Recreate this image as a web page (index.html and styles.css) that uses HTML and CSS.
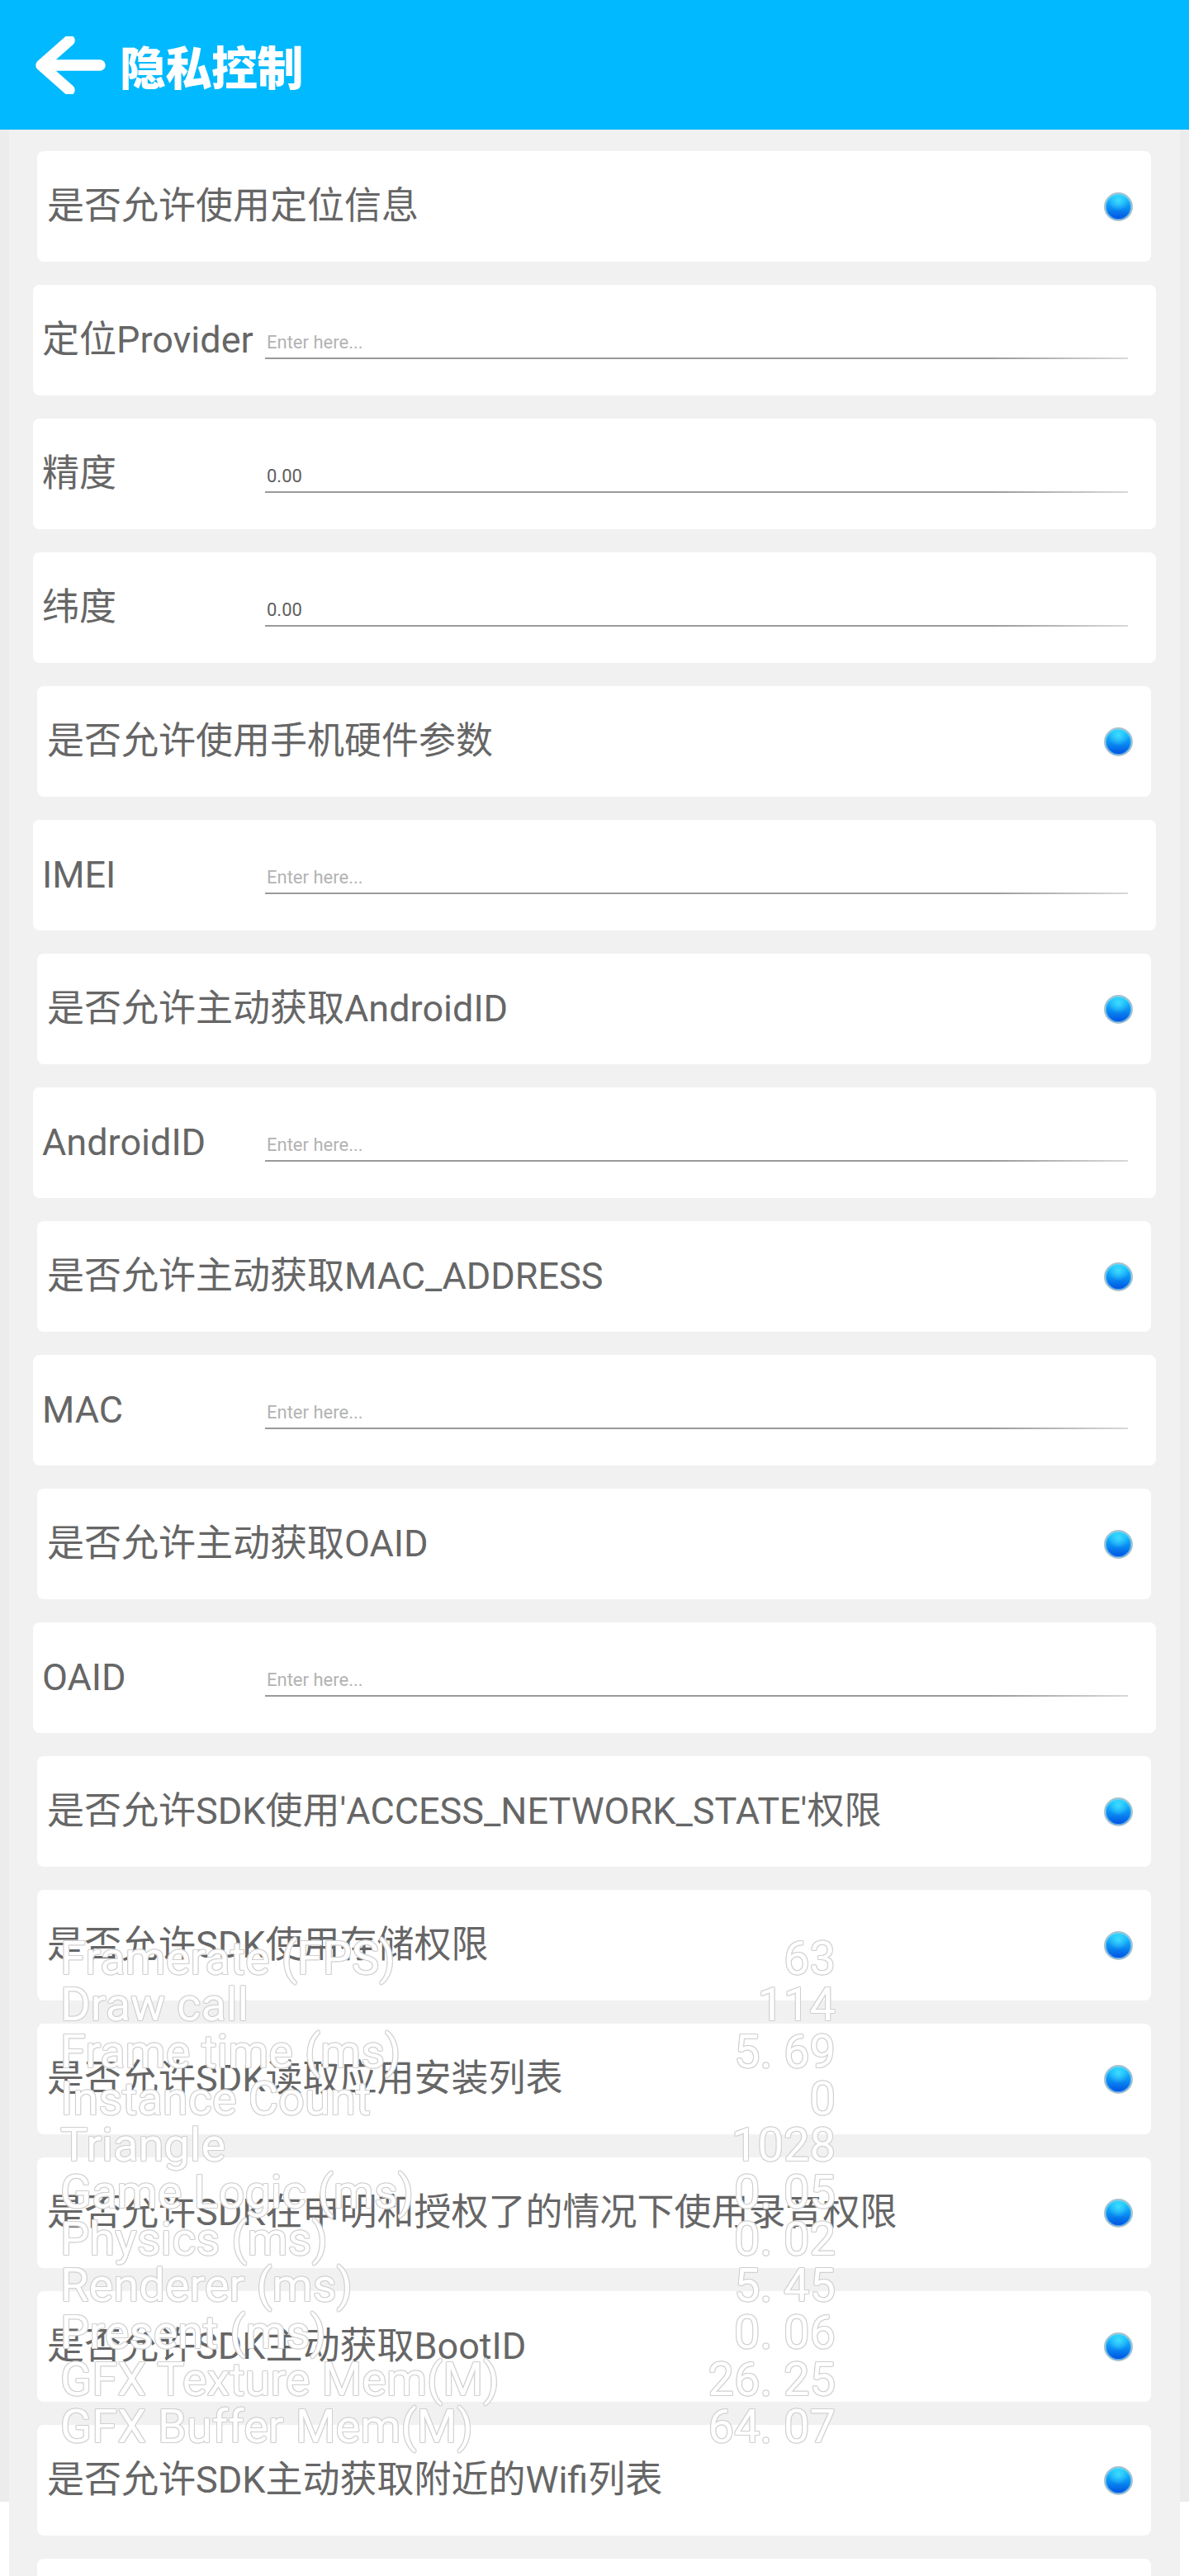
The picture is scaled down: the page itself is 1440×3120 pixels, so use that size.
FILE: index.html
```html
<!DOCTYPE html>
<html lang="zh-CN">
<head>
<meta charset="utf-8">
<title>隐私控制</title>
<link rel="stylesheet" href="styles.css">
</head>
<body>
<header class="topbar">
  <svg class="back" width="90" height="70" viewBox="0 0 90 70" aria-hidden="true">
    <path d="M42 5 L8 35 L42 65 M8 35 H79" fill="none" stroke="#fff" stroke-width="13.5" stroke-linecap="round" stroke-linejoin="round"/>
  </svg>
  <h1 class="title">隐私控制</h1>
</header>

<main class="page">
  <div class="list">
    <div class="card toggle-card"><span class="label">是否允许使用定位信息</span><span class="dot"></span></div>
    <div class="card input-card"><span class="ilabel">定位Provider</span><div class="field placeholder">Enter here...</div></div>
    <div class="card input-card"><span class="ilabel">精度</span><div class="field value">0.00</div></div>
    <div class="card input-card"><span class="ilabel">纬度</span><div class="field value">0.00</div></div>
    <div class="card toggle-card"><span class="label">是否允许使用手机硬件参数</span><span class="dot"></span></div>
    <div class="card input-card"><span class="ilabel">IMEI</span><div class="field placeholder">Enter here...</div></div>
    <div class="card toggle-card"><span class="label">是否允许主动获取AndroidID</span><span class="dot"></span></div>
    <div class="card input-card"><span class="ilabel">AndroidID</span><div class="field placeholder">Enter here...</div></div>
    <div class="card toggle-card"><span class="label">是否允许主动获取MAC_ADDRESS</span><span class="dot"></span></div>
    <div class="card input-card"><span class="ilabel">MAC</span><div class="field placeholder">Enter here...</div></div>
    <div class="card toggle-card"><span class="label">是否允许主动获取OAID</span><span class="dot"></span></div>
    <div class="card input-card"><span class="ilabel">OAID</span><div class="field placeholder">Enter here...</div></div>
    <div class="card toggle-card"><span class="label">是否允许SDK使用'ACCESS_NETWORK_STATE'权限</span><span class="dot"></span></div>
    <div class="card toggle-card"><span class="label">是否允许SDK使用存储权限</span><span class="dot"></span></div>
    <div class="card toggle-card"><span class="label">是否允许SDK读取应用安装列表</span><span class="dot"></span></div>
    <div class="card toggle-card"><span class="label">是否允许SDK在申明和授权了的情况下使用录音权限</span><span class="dot"></span></div>
    <div class="card toggle-card"><span class="label">是否允许SDK主动获取BootID</span><span class="dot"></span></div>
    <div class="card toggle-card"><span class="label">是否允许SDK主动获取附近的Wifi列表</span><span class="dot"></span></div>
    <div class="card toggle-card" aria-hidden="true"></div>
  </div>

  <div class="stats">
    <span>Framerate (FPS)</span><span class="num">63</span>
    <span>Draw call</span><span class="num">114</span>
    <span>Frame time (ms)</span><span class="num">5. 69</span>
    <span>Instance Count</span><span class="num">0</span>
    <span>Triangle</span><span class="num">1028</span>
    <span>Game Logic (ms)</span><span class="num">0. 05</span>
    <span>Physics (ms)</span><span class="num">0. 02</span>
    <span>Renderer (ms)</span><span class="num">5. 45</span>
    <span>Present (ms)</span><span class="num">0. 06</span>
    <span>GFX Texture Mem(M)</span><span class="num">26. 25</span>
    <span>GFX Buffer Mem(M)</span><span class="num">64. 07</span>
  </div>
</main>
</body>
</html>
```

FILE: styles.css
```css
* { box-sizing: border-box; }

html, body {
  margin: 0;
  padding: 0;
}

body {
  width: 1440px;
  font-family: Roboto, "Noto Sans CJK SC", sans-serif;
  background: #ffffff;
}

.topbar {
  height: 157px;
  background: #00b9fe;
  display: flex;
  align-items: center;
  padding-left: 42px;
}

.back {
  display: block;
  flex: none;
}

.title {
  margin: 0 0 0 13px;
  color: #ffffff;
  font-family: "Noto Sans CJK SC", sans-serif;
  font-size: 56px;
  font-weight: 900;
  line-height: 1;
  letter-spacing: -0.5px;
}

.page {
  position: relative;
  background: linear-gradient(to bottom, #ececec 2873px, #ffffff 2873px);
  padding: 0 11px;
}

.list {
  background: #f1f1f1;
  padding-top: 26px;
  min-height: 2963px;
  display: flex;
  flex-direction: column;
  gap: 28px;
}

.card {
  height: 134px;
  background: #ffffff;
  border-radius: 8px;
  flex: none;
}

.toggle-card {
  margin: 0 35px 0 34px;
  display: flex;
  align-items: center;
  justify-content: space-between;
  padding: 0 22px 0 12px;
}

.label {
  font-size: 45px;
  color: #666666;
  line-height: 1.2;
  white-space: nowrap;
}

.dot {
  width: 35px;
  height: 35px;
  border-radius: 50%;
  border: 2.5px solid #a9c3cf;
  background: radial-gradient(circle at 50% 25%, #3fdcff 0%, rgba(63,220,255,0) 45%),
              linear-gradient(to bottom, #1cd0ff 0%, #0a8cf2 55%, #0050e0 100%);
  box-shadow: inset 0 0 0 1px rgba(120, 220, 255, 0.6);
  flex: none;
}

.input-card {
  margin: 0 29px;
  display: flex;
  align-items: center;
  padding: 0 34px 0 11px;
}

.ilabel {
  width: 270px;
  flex: none;
  font-size: 45px;
  color: #666666;
  line-height: 1.2;
  white-space: nowrap;
}

.field {
  flex: 1;
  align-self: flex-start;
  margin-top: 57px;
  height: 33px;
  padding: 0 0 5px 2px;
  font-size: 22px;
  line-height: 26px;
  background: linear-gradient(to right, #9a9a9a 0%, #9a9a9a 84%, #d8d8d8 100%) left bottom / 100% 2px no-repeat;
}

.placeholder { color: #b3b3b3; }
.value { color: #5f5f5f; }

.stats {
  position: absolute;
  left: 73px;
  top: 2186.5px;
  width: 939px;
  display: grid;
  grid-template-columns: 1fr auto;
  font-family: Roboto, sans-serif;
  font-size: 56px;
  line-height: 56.7px;
  color: #ffffff;
  text-shadow: 1px 0 #cfcfcf, -1px 0 #cfcfcf, 0 1px #cfcfcf, 0 -1px #cfcfcf,
               1px 1px #dcdcdc, -1px -1px #dcdcdc, 1px -1px #dcdcdc, -1px 1px #dcdcdc;
  white-space: pre;
  pointer-events: none;
}

.stats .num { text-align: right; }
```
